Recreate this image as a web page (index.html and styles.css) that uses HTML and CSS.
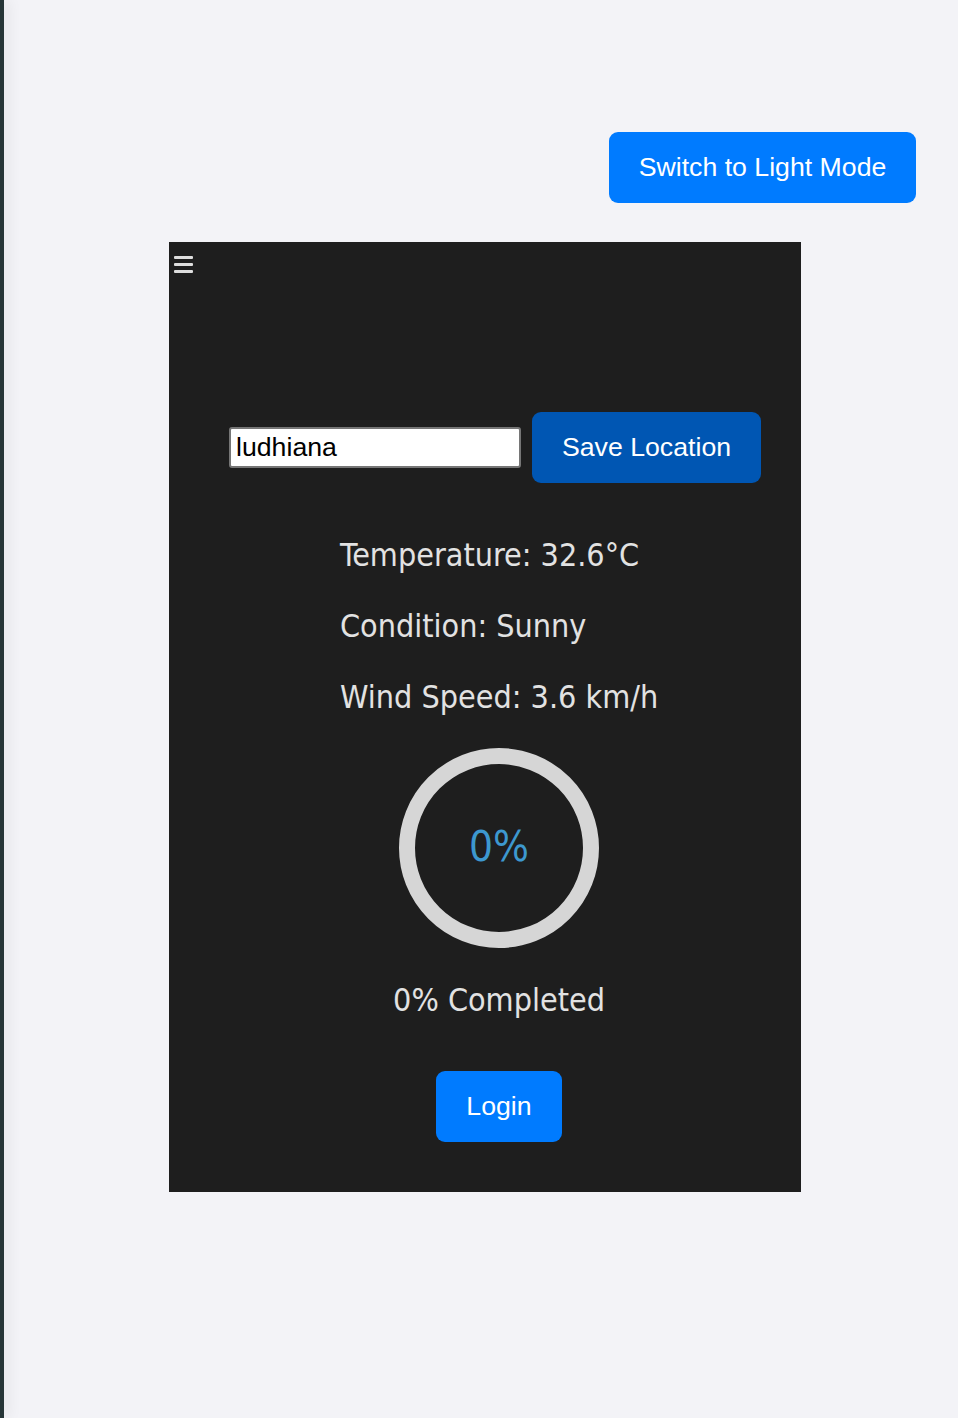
FILE: index.html
```html
<!DOCTYPE html>
<html lang="en">
<head>
<meta charset="utf-8">
<title>Weather</title>
<link rel="stylesheet" href="styles.css">
</head>
<body>
<div class="edge"></div>
<main class="page">
  <div class="topbar">
    <button class="btn btn-mode">Switch to Light Mode</button>
  </div>
  <section class="card">
    <div class="menu" aria-label="menu"><span></span><span></span><span></span></div>
    <div class="content">
      <div class="loc-row">
        <input class="loc-input" type="text" value="ludhiana">
        <button class="btn btn-save">Save Location</button>
      </div>
      <div class="info">
        <p>Temperature: 32.6°C</p>
        <p>Condition: Sunny</p>
        <p>Wind Speed: 3.6 km/h</p>
      </div>
      <div class="ring"><span>0%</span></div>
      <p class="done">0% Completed</p>
      <button class="btn btn-login">Login</button>
    </div>
  </section>
</main>
</body>
</html>
```

FILE: styles.css
```css
html, body {
  margin: 0;
  padding: 0;
}
body {
  background: #f3f3f7;
  display: flex;
  min-height: 1418px;
}
.edge {
  width: 4px;
  flex: none;
  background: #263537;
  box-shadow: 3px 0 14px rgba(0, 0, 0, 0.14);
}
.page {
  flex: 1;
  padding-top: 132px;
}
.topbar {
  display: flex;
  justify-content: flex-end;
  padding-right: 42px;
}
.btn {
  border: none;
  color: #fff;
  font-family: "Liberation Sans", Arial, sans-serif;
  font-size: 26.7px;
  height: 71px;
  border-radius: 9px;
  padding: 0 30px;
  cursor: pointer;
}
.btn-mode {
  background: #007bff;
  width: 307px;
  padding: 0;
}
.card {
  margin: 39px 0 0 165px;
  width: 632px;
  background: #1e1e1e;
  padding: 14px 0 50px 0;
  box-sizing: border-box;
}
.menu {
  display: flex;
  flex-direction: column;
  gap: 4px;
  margin-left: 5px;
  width: 19px;
  height: 17px;
}
.menu span {
  display: block;
  height: 3px;
  background: #dedede;
  border-radius: 1px;
}
.content {
  padding-left: 28px;
  display: flex;
  flex-direction: column;
  align-items: center;
  margin-top: 139px;
}
.loc-row {
  align-self: flex-start;
  margin-left: 32px;
  display: flex;
  align-items: center;
  gap: 11px;
}
.loc-input {
  width: 292px;
  height: 41px;
  box-sizing: border-box;
  border: 2px solid #767676;
  border-radius: 3px;
  padding: 0 5px;
  font-family: "Liberation Sans", Arial, sans-serif;
  font-size: 26.7px;
  color: #000;
  background: #fff;
}
.btn-save {
  background: #0056b3;
  width: 229px;
  padding: 0;
}
.info {
  align-self: flex-start;
  margin: 37px 0 0 143px;
}
.info p, .done {
  margin: 0;
  font-family: "DejaVu Sans Condensed", "DejaVu Sans", sans-serif;
  font-size: 32px;
  line-height: 71px;
  color: #e2e2e2;
}
.ring {
  margin-top: 15px;
  width: 200px;
  height: 200px;
  box-sizing: border-box;
  border: 16px solid #d6d6d6;
  border-radius: 50%;
  display: flex;
  align-items: center;
  justify-content: center;
}
.ring span {
  font-family: "DejaVu Sans Condensed", "DejaVu Sans", sans-serif;
  font-size: 42px;
  color: #3d98cf;
  margin-top: -4px;
}
.done {
  margin-top: 17px;
}
.btn-login {
  margin-top: 35px;
  background: #007bff;
  width: 126px;
  padding: 0;
}
```
